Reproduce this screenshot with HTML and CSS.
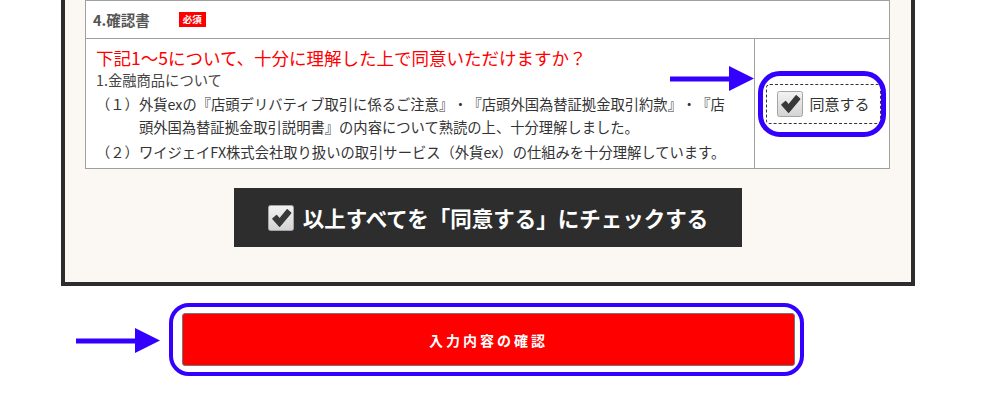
FILE: index.html
```html
<!DOCTYPE html>
<html lang="ja">
<head>
<meta charset="utf-8">
<title>確認書</title>
<link rel="stylesheet" href="styles.css">
</head>
<body>
<div class="page">
  <section class="frame">
    <table class="confirm">
      <colgroup><col class="col-terms"><col class="col-agree"></colgroup>
      <tr>
        <th colspan="2" class="head">
          <div class="head-inner"><span class="head-title">4.確認書</span><span class="badge">必須</span></div>
        </th>
      </tr>
      <tr>
        <td class="terms">
          <p class="question">下記1～5について、十分に理解した上で同意いただけますか？</p>
          <p class="section-title">1.金融商品について</p>
          <ol class="items">
            <li><span class="num">（１）</span>外貨exの『店頭デリバティブ取引に係るご注意』・『店頭外国為替証拠金取引約款』・『店頭外国為替証拠金取引説明書』の内容について熟読の上、十分理解しました。</li>
            <li><span class="num">（２）</span>ワイジェイFX株式会社取り扱いの取引サービス（外貨ex）の仕組みを十分理解しています。</li>
          </ol>
        </td>
        <td class="agree-cell">
          <label class="agree">
            <svg class="check-icon" viewBox="0 0 26 26" width="26" height="26" aria-hidden="true">
              <defs><linearGradient id="cbg1" x1="0" y1="0" x2="0" y2="1"><stop offset="0" stop-color="#f3f3f3"/><stop offset="1" stop-color="#d3d3d3"/></linearGradient></defs>
              <rect x="0.5" y="0.5" width="25" height="25" rx="2" fill="url(#cbg1)" stroke="#a5a5a5"/>
              <path d="M4.8 13.8 L8.6 10.4 L11.6 14 L19.2 4.6 L22.8 8 L11.6 21.4 Z" fill="#383838" stroke="#383838" stroke-width="1.2" stroke-linejoin="round"/>
            </svg>
            <span>同意する</span>
          </label>
        </td>
      </tr>
    </table>
    <button class="all-agree" type="button">
      <svg class="check-icon" viewBox="0 0 26 26" width="26" height="26" aria-hidden="true">
        <defs><linearGradient id="cbg2" x1="0" y1="0" x2="0" y2="1"><stop offset="0" stop-color="#f3f3f3"/><stop offset="1" stop-color="#d3d3d3"/></linearGradient></defs>
        <rect x="0.5" y="0.5" width="25" height="25" rx="2" fill="url(#cbg2)" stroke="#a5a5a5"/>
        <path d="M4.8 13.8 L8.6 10.4 L11.6 14 L19.2 4.6 L22.8 8 L11.6 21.4 Z" fill="#383838" stroke="#383838" stroke-width="1.2" stroke-linejoin="round"/>
      </svg>
      <span>以上すべてを「同意する」にチェックする</span>
    </button>
  </section>
  <button class="submit" type="button">入力内容の確認</button>

  <div class="ring ring-agree"></div>
  <div class="ring ring-submit"></div>
  <svg class="arrow arrow-agree" viewBox="0 0 84 25" width="84" height="25" aria-hidden="true">
    <rect x="0" y="10.5" width="61" height="5" fill="#3300ff"/>
    <polygon points="59,0 84,12.5 59,25" fill="#3300ff"/>
  </svg>
  <svg class="arrow arrow-submit" viewBox="0 0 84 25" width="84" height="25" aria-hidden="true">
    <rect x="0" y="10.5" width="61" height="5" fill="#3300ff"/>
    <polygon points="59,0 84,12.5 59,25" fill="#3300ff"/>
  </svg>
</div>
</body>
</html>
```
FILE: styles.css
```css
body {
  margin: 0;
  background: #ffffff;
  font-family: "Noto Sans CJK JP", "Noto Sans", sans-serif;
  color: #333333;
  text-spacing-trim: space-all;
}

.page {
  position: relative;
  width: 989px;
  height: 408px;
  overflow: hidden;
}

.frame {
  margin-left: 61px;
  width: 854px;
  box-sizing: border-box;
  border: 4px solid #2d2d2d;
  border-top: 0;
  background: #fbf7f3;
  padding: 0 22px 35px 20px;
}

.confirm {
  width: 804px;
  table-layout: fixed;
  border-collapse: collapse;
  background: #ffffff;
}

.col-terms { width: 669px; }
.col-agree { width: 135px; }

.confirm th,
.confirm td {
  border: 1px solid #a0a0a0;
  padding: 0;
}

.head {
  text-align: left;
  font-weight: normal;
}

.head-inner {
  display: flex;
  align-items: center;
  height: 37px;
  padding-left: 7px;
}

.head-title {
  font-size: 14.5px;
  font-weight: bold;
  color: #555555;
}

.badge {
  margin-left: 29px;
  width: 27px;
  height: 15px;
  line-height: 15px;
  background: #ff0000;
  color: #ffffff;
  font-size: 9.5px;
  font-weight: bold;
  text-align: center;
}

.confirm .terms {
  vertical-align: top;
  padding: 7px 18px 5px 10px;
}

.question {
  margin: 0;
  font-size: 17.5px;
  line-height: 24px;
  color: #ff0000;
}

.section-title {
  margin: 0;
  font-size: 14.3px;
  line-height: 20px;
  color: #444444;
}

.items {
  list-style: none;
  margin: 2px 0 0;
  padding: 0;
  font-size: 14.3px;
  line-height: 23px;
  color: #333333;
}

.items li {
  padding-left: 3em;
  text-indent: -3em;
}

.items li + li {
  margin-top: 2px;
}

.agree-cell {
  text-align: center;
  vertical-align: middle;
}

.agree {
  display: inline-flex;
  align-items: center;
  gap: 6px;
  height: 40px;
  box-sizing: border-box;
  padding: 0 10px;
  margin-left: 3px;
  border: 1px dashed #333333;
  border-radius: 4px;
  font-size: 15px;
  color: #333333;
}

.check-icon {
  display: block;
  flex: none;
}

.all-agree {
  display: flex;
  align-items: center;
  justify-content: center;
  gap: 9px;
  width: 508px;
  height: 59px;
  margin: 19px 0 0 149px;
  padding: 0;
  border: 0;
  background: #2d2d2d;
  color: #ffffff;
  font-family: "Noto Sans CJK JP", sans-serif;
  font-size: 21.5px;
  font-weight: bold;
  text-spacing-trim: space-all;
}

.submit {
  display: block;
  width: 613px;
  height: 53px;
  margin: 27px 0 0 182px;
  padding: 0;
  border: 1px solid #777777;
  border-radius: 3px;
  background: #ff0000;
  color: #ffffff;
  font-family: "Noto Sans CJK JP", sans-serif;
  font-size: 14px;
  font-weight: bold;
  letter-spacing: 3px;
}

.ring {
  position: absolute;
  box-sizing: border-box;
  border: 5px solid #3300ff;
  border-radius: 22px;
}

.ring-agree {
  left: 758px;
  top: 71px;
  width: 128px;
  height: 66px;
}

.ring-submit {
  left: 169px;
  top: 303px;
  width: 635px;
  height: 73px;
  border-width: 4px;
  border-radius: 20px;
}

.arrow {
  position: absolute;
}

.arrow-agree {
  left: 670px;
  top: 66px;
}

.arrow-submit {
  left: 76px;
  top: 328px;
}
```
